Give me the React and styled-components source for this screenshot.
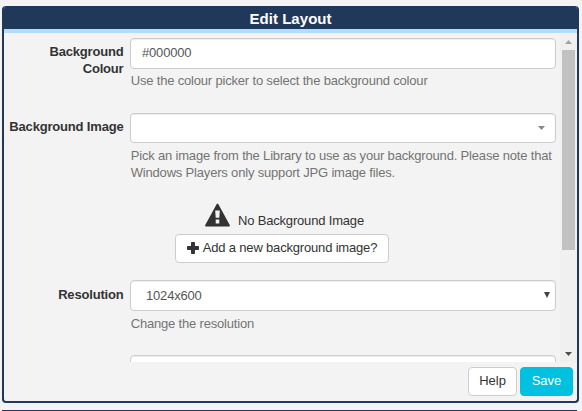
import React from "react";
import styled, { createGlobalStyle } from "styled-components";

const Global = createGlobalStyle`
  * { box-sizing: border-box; }
  body {
    margin: 0;
    background: #f3f3f3;
    font: 13px/17px "Liberation Sans", Arial, sans-serif;
    letter-spacing: -0.18px;
    color: #333;
    overflow: hidden;
  }
`;

const Page = styled.div`
  height: 411px;
  padding: 6px 3px 0 2px;
  display: flex;
  flex-direction: column;
  justify-content: space-between;
`;

const Dialog = styled.section`
  height: 397px;
  border: 2px solid #20385a;
  border-top: 0;
  border-radius: 4px;
  background: #f3f3f3;
  display: flex;
  flex-direction: column;
  overflow: hidden;
`;

const Title = styled.h1`
  margin: 0;
  height: 27px;
  flex: none;
  padding-top: 2px;
  background: #20385a;
  border-bottom: 4px solid #b3dcfb;
  color: #fff;
  font-size: 15px;
  line-height: 21px;
  text-align: center;
  letter-spacing: 0.05px;
`;

const Body = styled.div`
  height: 329px;
  flex: none;
  display: flex;
  overflow: hidden;
`;

const Form = styled.div`
  width: 556px;
  flex: none;
  padding: 5px 4px 0 0;
`;

const Row = styled.div`
  display: grid;
  grid-template-columns: 119.5px 426px;
  column-gap: 6.5px;
  height: ${(p) => p.$height}px;
`;

const Label = styled.label`
  font-weight: bold;
  text-align: right;
  padding-top: ${(p) => p.$top || 5}px;
  white-space: pre-line;
`;

const Field = styled.div`
  height: ${(p) => p.$height || 31}px;
  border: 1px solid #ccc;
  border-radius: 4px;
  background: #fff;
  box-shadow: inset 0 1px 1px rgba(0, 0, 0, 0.075);
  color: #555;
  display: flex;
  align-items: center;
  justify-content: space-between;
  padding: 0 ${(p) => p.$right || 10}px ${(p) => p.$bottom ?? 2}px ${(p) => p.$left || 11}px;
`;

const Hint = styled.p`
  margin: ${(p) => p.$gap || 3}px 0 0;
  padding-left: 0.7px;
  color: #737373;
  white-space: pre;
`;

const Missing = styled.div`
  height: 77px;
  padding-left: 171px;
`;

const Notice = styled.div`
  height: 31px;
  padding-left: 30px;
  display: flex;
  align-items: flex-start;
  gap: 7px;
  span { padding-top: 9px; }
`;

const Button = styled.button`
  height: 29px;
  width: ${(p) => p.$width}px;
  padding: 0 0 2px;
  border: 1px solid ${(p) => (p.$primary ? "#00c1e0" : "#ccc")};
  border-radius: 4px;
  background: ${(p) => (p.$primary ? "#00c1e0" : "#fff")};
  color: ${(p) => (p.$primary ? "#fff" : "#333")};
  font: inherit;
  letter-spacing: ${(p) => p.$spacing || 0}px;
  display: flex;
  align-items: center;
  justify-content: center;
  gap: 4px;
`;

const Scrollbar = styled.div`
  width: 17px;
  background: #f0f0f0;
  display: flex;
  flex-direction: column;
  align-items: center;
  justify-content: space-between;
`;

const ScrollTop = styled.div`
  width: 13px;
  display: flex;
  flex-direction: column;
  align-items: center;
  padding-top: 7px;
  gap: 6px;
`;

const Thumb = styled.div`
  width: 13px;
  height: 200px;
  background: #c1c1c1;
`;

const ScrollEnd = styled.div`
  height: 10px;
  display: flex;
`;

const Footer = styled.footer`
  display: flex;
  justify-content: flex-end;
  gap: 3px;
  padding: 5px 4px 0;
`;

const NextPanel = styled.div`
  height: 1px;
  margin-right: 2px;
  background: #20385a;
`;

const ArrowIcon = styled.svg`
  display: block;
  flex: none;
`;

const Arrow = ({ w = 7, h = 4, up, fill }) => (
  <ArrowIcon width={w} height={h} viewBox="0 0 10 10" preserveAspectRatio="none">
    <path d={up ? "M0 10H10L5 0Z" : "M0 0H10L5 10Z"} fill={fill} />
  </ArrowIcon>
);

const Warning = () => (
  <svg width="26" height="24" viewBox="0 0 26 24">
    <path
      fillRule="evenodd"
      fill="#333"
      d="M11.6 1.2Q12.5-.3 13.4 1.2L24.6 21.7Q25.4 23.5 23.6 23.5H1.4Q-.4 23.5.4 21.7ZM10.2 7.4 10.7 14.8H14.3L14.8 7.4ZM10.7 16.6V20.4H14.3V16.6Z"
    />
  </svg>
);

const Plus = () => (
  <svg width="12" height="12" viewBox="0 0 12 12">
    <path d="M4.8 0H7.2Q8 0 8 .8V4H11.2Q12 4 12 4.8V7.2Q12 8 11.2 8H8V11.2Q8 12 7.2 12H4.8Q4 12 4 11.2V8H.8Q0 8 0 7.2V4.8Q0 4 .8 4H4V.8Q4 0 4.8 0Z" fill="#333" />
  </svg>
);

export default function App() {
  return (
    <>
      <Global />
      <Page>
        <Dialog>
          <Title>Edit Layout</Title>
          <Body>
            <Form>
              <Row $height={75}>
                <Label>{"Background\nColour"}</Label>
                <div>
                  <Field>#000000</Field>
                  <Hint>Use the colour picker to select the background colour</Hint>
                </div>
              </Row>
              <Row $height={90}>
                <Label>Background Image</Label>
                <div>
                  <Field $height={30} $bottom={0}>
                    <span />
                    <Arrow fill="#888" />
                  </Field>
                  <Hint $gap={4}>{"Pick an image from the Library to use as your background. Please note that\nWindows Players only support JPG image files."}</Hint>
                </div>
              </Row>
              <Missing>
                <Notice>
                  <Warning />
                  <span>No Background Image</span>
                </Notice>
                <Button $width={214} $spacing={-0.18}>
                  <Plus />
                  Add a new background image?
                </Button>
              </Missing>
              <Row $height={75}>
                <Label $top={6}>Resolution</Label>
                <div>
                  <Field $left={15} $right={5} $bottom={1}>
                    1024x600
                    <Arrow w={6} h={6} fill="#444" />
                  </Field>
                  <Hint $gap={4}>Change the resolution</Hint>
                </div>
              </Row>
              <Row $height={31}>
                <span />
                <Field />
              </Row>
            </Form>
            <Scrollbar>
              <ScrollTop>
                <Arrow up fill="#a3a3a3" />
                <Thumb />
              </ScrollTop>
              <ScrollEnd>
                <Arrow fill="#505050" />
              </ScrollEnd>
            </Scrollbar>
          </Body>
          <Footer>
            <Button $width={49}>Help</Button>
            <Button $width={53} $primary>Save</Button>
          </Footer>
        </Dialog>
        <NextPanel />
      </Page>
    </>
  );
}
